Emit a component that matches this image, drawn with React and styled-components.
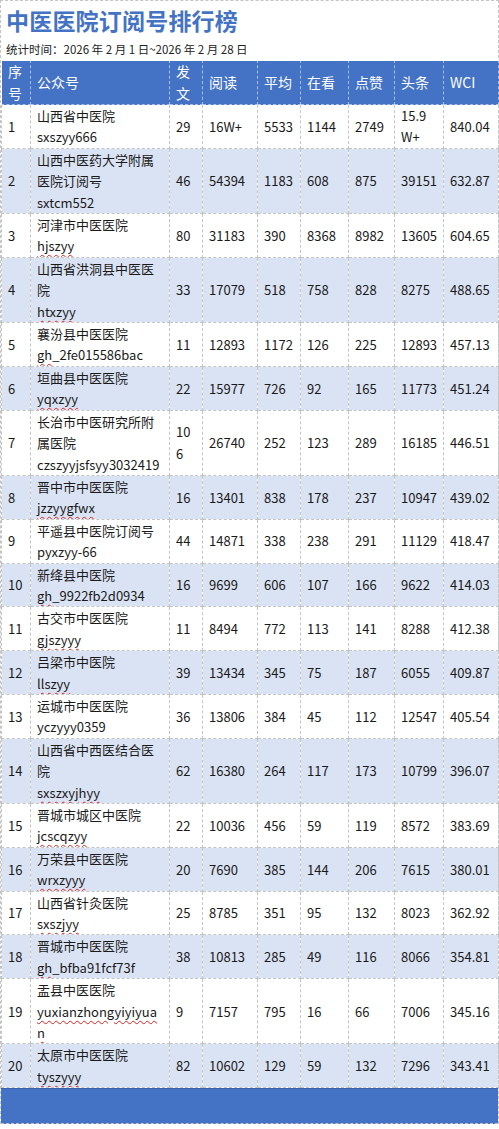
import React from "react";
import styled, { createGlobalStyle } from "styled-components";

const GlobalStyle = createGlobalStyle`
  html, body {
    margin: 0;
    padding: 0;
    background: #ffffff;
  }
  body {
    font-family: "Noto Sans CJK SC", "Noto Sans", sans-serif;
  }
`;

const grid = "1px dashed #c4c4c4";

const Sheet = styled.div`
  width: 497px;
  border-top: ${grid};
  border-left: ${grid};
  border-right: ${grid};
  background: #ffffff;
`;

const Title = styled.h1`
  margin: 0;
  padding: 3px 0 0 5px;
  height: 34px;
  font-size: 23px;
  line-height: 32px;
  font-weight: 700;
  color: #4472c4;
  letter-spacing: 0.2px;
`;

const Period = styled.div`
  padding-left: 5px;
  height: 22px;
  font-size: 11.5px;
  line-height: 22px;
  color: #222;
`;

const Table = styled.table`
  width: 497px;
  border-collapse: collapse;
  table-layout: fixed;
  font-size: 13px;
  color: #1a1a1a;
`;

const HeadCell = styled.th`
  background: #4472c4;
  color: #ffffff;
  font-weight: 400;
  font-size: 14px;
  text-align: left;
  line-height: 21.5px;
  padding: 0 5px 0 6px;
  height: 42px;
  vertical-align: middle;
  border: 1px dashed rgba(255, 255, 255, 0.55);
  white-space: pre-line;
`;

const Row = styled.tr`
  background: ${(p) => (p.$shade ? "#dae3f3" : "#ffffff")};
`;

const Cell = styled.td`
  padding: 0 3px 0 6px;
  line-height: 21.4px;
  vertical-align: middle;
  border: ${grid};
  white-space: pre-line;
  overflow: hidden;
`;

const Line = styled.span`
  display: block;
  white-space: nowrap;
`;

const Typo = styled.span`
  text-decoration: underline wavy #e0201c;
  text-decoration-thickness: 1px;
  text-underline-offset: 3px;
`;

const Footer = styled.div`
  height: 34px;
  background: #4472c4;
  border-top: 1px solid #3a63ae;
  border-bottom: ${grid};
`;

const columns = [
  { label: "序\n号", width: 29 },
  { label: "公众号", width: 139 },
  { label: "发\n文", width: 33 },
  { label: "阅读", width: 55 },
  { label: "平均", width: 43 },
  { label: "在看", width: 48 },
  { label: "点赞", width: 46 },
  { label: "头条", width: 49 },
  { label: "WCI", width: 55 }
];

// wave: "all" underlines the whole id, "gh" only the prefix
const rows = [
  { cn: ["山西省中医院"], id: ["sxszyy666"], posts: "29", reads: "16W+", avg: "5533", looks: "1144", likes: "2749", top: "15.9\nW+", wci: "840.04" },
  { cn: ["山西中医药大学附属", "医院订阅号"], id: ["sxtcm552"], posts: "46", reads: "54394", avg: "1183", looks: "608", likes: "875", top: "39151", wci: "632.87" },
  { cn: ["河津市中医医院"], id: ["hjszyy"], wave: "all", posts: "80", reads: "31183", avg: "390", looks: "8368", likes: "8982", top: "13605", wci: "604.65" },
  { cn: ["山西省洪洞县中医医", "院"], id: ["htxzyy"], wave: "all", posts: "33", reads: "17079", avg: "518", looks: "758", likes: "828", top: "8275", wci: "488.65" },
  { cn: ["襄汾县中医医院"], id: ["gh_2fe015586bac"], wave: "gh", posts: "11", reads: "12893", avg: "1172", looks: "126", likes: "225", top: "12893", wci: "457.13" },
  { cn: ["垣曲县中医医院"], id: ["yqxzyy"], wave: "all", posts: "22", reads: "15977", avg: "726", looks: "92", likes: "165", top: "11773", wci: "451.24" },
  { cn: ["长治市中医研究所附", "属医院"], id: ["czszyyjsfsyy3032419"], posts: "10\n6", reads: "26740", avg: "252", looks: "123", likes: "289", top: "16185", wci: "446.51" },
  { cn: ["晋中市中医医院"], id: ["jzzyygfwx"], wave: "all", posts: "16", reads: "13401", avg: "838", looks: "178", likes: "237", top: "10947", wci: "439.02" },
  { cn: ["平遥县中医院订阅号"], id: ["pyxzyy-66"], posts: "44", reads: "14871", avg: "338", looks: "238", likes: "291", top: "11129", wci: "418.47" },
  { cn: ["新绛县中医院"], id: ["gh_9922fb2d0934"], wave: "gh", posts: "16", reads: "9699", avg: "606", looks: "107", likes: "166", top: "9622", wci: "414.03" },
  { cn: ["古交市中医医院"], id: ["gjszyyy"], wave: "all", posts: "11", reads: "8494", avg: "772", looks: "113", likes: "141", top: "8288", wci: "412.38" },
  { cn: ["吕梁市中医院"], id: ["llszyy"], wave: "all", posts: "39", reads: "13434", avg: "345", looks: "75", likes: "187", top: "6055", wci: "409.87" },
  { cn: ["运城市中医医院"], id: ["yczyyy0359"], posts: "36", reads: "13806", avg: "384", looks: "45", likes: "112", top: "12547", wci: "405.54" },
  { cn: ["山西省中西医结合医", "院"], id: ["sxszxyjhyy"], wave: "all", posts: "62", reads: "16380", avg: "264", looks: "117", likes: "173", top: "10799", wci: "396.07" },
  { cn: ["晋城市城区中医院"], id: ["jcscqzyy"], wave: "all", posts: "22", reads: "10036", avg: "456", looks: "59", likes: "119", top: "8572", wci: "383.69" },
  { cn: ["万荣县中医医院"], id: ["wrxzyyy"], wave: "all", posts: "20", reads: "7690", avg: "385", looks: "144", likes: "206", top: "7615", wci: "380.01" },
  { cn: ["山西省针灸医院"], id: ["sxszjyy"], wave: "all", posts: "25", reads: "8785", avg: "351", looks: "95", likes: "132", top: "8023", wci: "362.92" },
  { cn: ["晋城市中医医院"], id: ["gh_bfba91fcf73f"], wave: "gh", posts: "38", reads: "10813", avg: "285", looks: "49", likes: "116", top: "8066", wci: "354.81" },
  { cn: ["盂县中医医院"], id: ["yuxianzhongyiyiyua", "n"], wave: "all", posts: "9", reads: "7157", avg: "795", looks: "16", likes: "66", top: "7006", wci: "345.16" },
  { cn: ["太原市中医医院"], id: ["tyszyyy"], wave: "all", posts: "82", reads: "10602", avg: "129", looks: "59", likes: "132", top: "7296", wci: "343.41" }
];

const IdLine = ({ text, wave }) => {
  if (wave === "all") return <Typo>{text}</Typo>;
  if (wave === "gh") {
    return (
      <>
        <Typo>{text.slice(0, 2)}</Typo>
        {text.slice(2)}
      </>
    );
  }
  return text;
};

const NameCell = ({ row }) => (
  <Cell>
    {row.cn.map((t) => (
      <Line key={t}>{t}</Line>
    ))}
    {row.id.map((t) => (
      <Line key={t}>
        <IdLine text={t} wave={row.wave} />
      </Line>
    ))}
  </Cell>
);

export default function App() {
  return (
    <>
      <GlobalStyle />
      <Sheet>
        <Title>中医医院订阅号排行榜</Title>
        <Period>统计时间：2026 年 2 月 1 日~2026 年 2 月 28 日</Period>
        <Table>
          <colgroup>
            {columns.map((c) => (
              <col key={c.label} style={{ width: c.width }} />
            ))}
          </colgroup>
          <thead>
            <tr>
              {columns.map((c) => (
                <HeadCell key={c.label}>{c.label}</HeadCell>
              ))}
            </tr>
          </thead>
          <tbody>
            {rows.map((r, i) => (
              <Row key={r.id[0]} $shade={i % 2 === 1}>
                <Cell>{i + 1}</Cell>
                <NameCell row={r} />
                <Cell>{r.posts}</Cell>
                <Cell>{r.reads}</Cell>
                <Cell>{r.avg}</Cell>
                <Cell>{r.looks}</Cell>
                <Cell>{r.likes}</Cell>
                <Cell>{r.top}</Cell>
                <Cell>{r.wci}</Cell>
              </Row>
            ))}
          </tbody>
        </Table>
        <Footer />
      </Sheet>
    </>
  );
}
